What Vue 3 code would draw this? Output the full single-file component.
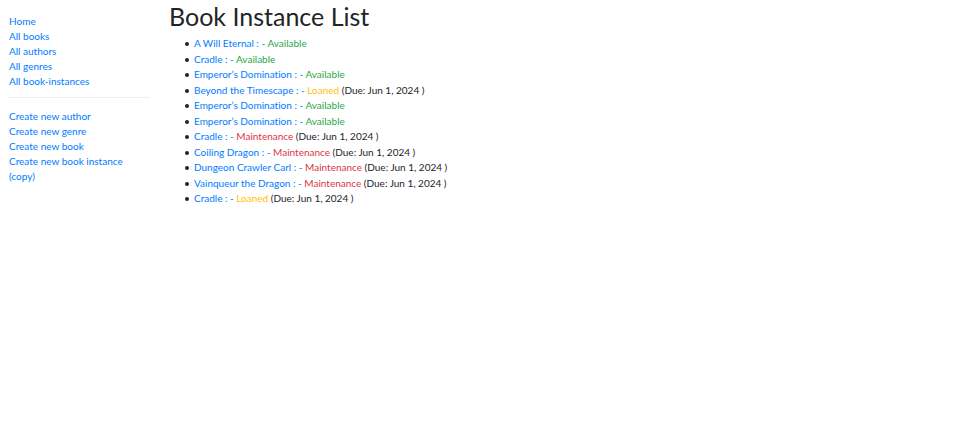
<script setup>
const browseLinks = ['Home', 'All books', 'All authors', 'All genres', 'All book-instances']
const createLinks = [
  'Create new author',
  'Create new genre',
  'Create new book',
  'Create new book instance (copy)',
]
const due = 'Jun 1, 2024'
const instances = [
  { title: 'A Will Eternal', status: 'Available' },
  { title: 'Cradle', status: 'Available' },
  { title: 'Emperor’s Domination', status: 'Available' },
  { title: 'Beyond the Timescape', status: 'Loaned', due },
  { title: 'Emperor’s Domination', status: 'Available' },
  { title: 'Emperor’s Domination', status: 'Available' },
  { title: 'Cradle', status: 'Maintenance', due },
  { title: 'Coiling Dragon', status: 'Maintenance', due },
  { title: 'Dungeon Crawler Carl', status: 'Maintenance', due },
  { title: 'Vainqueur the Dragon', status: 'Maintenance', due },
  { title: 'Cradle', status: 'Loaned', due },
]
</script>

<template>
  <div class="layout">
    <nav class="sidebar">
      <ul class="nav-list">
        <li v-for="link in browseLinks" :key="link"><a href="#">{{ link }}</a></li>
      </ul>
      <hr class="divider" />
      <ul class="nav-list">
        <li v-for="link in createLinks" :key="link"><a href="#">{{ link }}</a></li>
      </ul>
    </nav>
    <main class="content">
      <h1 class="title">Book Instance List</h1>
      <ul class="instances">
        <li v-for="(item, i) in instances" :key="i">
          <a href="#">{{ item.title }} : -</a>{{ ' ' }}<span :class="item.status.toLowerCase()">{{ item.status }}</span>
          <span v-if="item.due" class="due">{{ ' ' }}(Due: {{ item.due }} )</span>
        </li>
      </ul>
    </main>
  </div>
</template>

<style>
body {
  margin: 0;
  background: #fff;
}
</style>

<style scoped>
.layout {
  display: grid;
  grid-template-columns: 1fr 5fr;
  color: #212529;
  font-family: Lato, "Open Sans", sans-serif;
  font-size: 10px;
  line-height: 15px;
  font-variant-ligatures: none;
}
.sidebar {
  padding: 14px 10px 0 9px;
}
.nav-list {
  margin: 0;
  padding: 0;
  list-style: none;
}
.divider {
  margin: 8px 0 11px;
  border: 0;
  border-top: 1px solid #eee;
}
.content {
  padding: 1px 10px 0 9px;
}
.title {
  margin: 0 0 5px;
  font-size: 25px;
  font-weight: 400;
  line-height: 30px;
}
.instances {
  margin: 0;
  padding-left: 25px;
  list-style: none;
}
.instances li:nth-child(odd) {
  padding-bottom: 1px;
}
.instances li::before {
  content: "";
  display: inline-block;
  width: 4px;
  height: 4px;
  margin: 0 5px 0 -9px;
  border-radius: 50%;
  background: #212529;
  vertical-align: middle;
}
a {
  color: #007bff;
  text-decoration: none;
}
.available {
  color: #28a745;
}
.loaned {
  color: #ffc107;
}
.maintenance {
  color: #dc3545;
}
</style>
